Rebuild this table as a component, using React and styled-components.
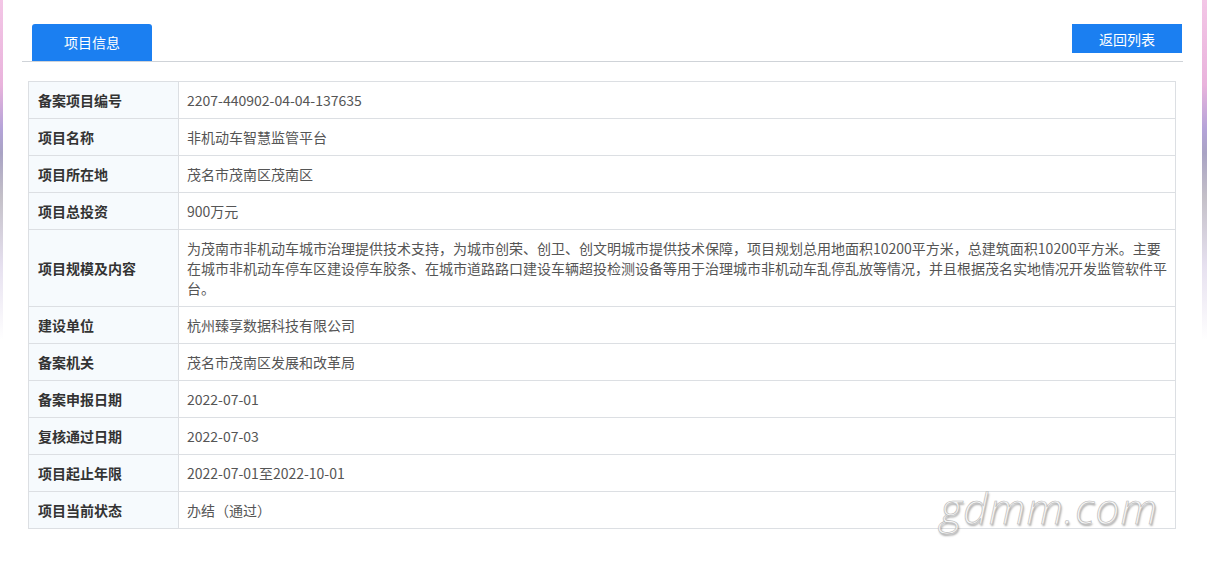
import React from 'react'
import styled, { createGlobalStyle } from 'styled-components'

const edge = `linear-gradient(180deg,#f3c6e6 0%,#e9b3dc 25%,#b4a3d8 38%,#a9a3c4 45%,#c4c0c8 58%,#e6e0ef 78%,#ffffff 100%)`

const Global = createGlobalStyle`
html,body{margin:0;padding:0;}
body{
  background:${edge} left top/3px 340px no-repeat, ${edge} right top/5px 340px no-repeat, #fff;
  font-family:"Microsoft YaHei","Noto Sans CJK SC",sans-serif;
  font-size:14px;color:#555;
  min-height:565px;
}
`

const Page=styled.div`
position:relative;
padding:24px 24px 0 22px;
height:541px;
`
const Header=styled.div`
display:flex;justify-content:space-between;align-items:flex-start;
padding:0 1px 0 10px;
border-bottom:1px solid #cfd3d8;
height:37px;
`
const Tab=styled.div`
width:120px;height:37px;line-height:37px;text-align:center;
background:#1b7ff1;color:#fff;font-size:14px;
border-radius:3px 3px 0 0;
`
const BackBtn=styled.button`
width:110px;height:29px;border:none;background:#1b7ff1;color:#fff;
font-family:inherit;font-size:14px;padding:0;cursor:pointer;
`
const Table=styled.table`
margin:19px 7px 0 6px;
width:calc(100% - 13px);
border-collapse:collapse;
border:1px solid #dcdfe3;
`
const Row=styled.tr``
const Label=styled.td`
width:131px;
padding:8px 9px;
line-height:20px;
background:#f6fafd;
color:#333;font-weight:bold;
border:1px solid #dcdfe3;
vertical-align:middle;
`
const Value=styled.td`
padding:8px 6px 8px 8px;
line-height:20px;
color:#555;
border:1px solid #dcdfe3;
`
const Watermark=styled.div`
position:absolute;
left:940px;top:478px;
font-family:"Open Sans","DejaVu Sans",sans-serif;
font-style:italic;font-weight:300;
font-size:43px;letter-spacing:1px;
color:#f6f6f6;
-webkit-text-stroke:0.6px #b8b8b8;
text-shadow:1px 2px 2px rgba(0,0,0,0.35);
pointer-events:none;
`

const rows=[
  ['备案项目编号','2207-440902-04-04-137635'],
  ['项目名称','非机动车智慧监管平台'],
  ['项目所在地','茂名市茂南区茂南区'],
  ['项目总投资','900万元'],
  ['项目规模及内容','为茂南市非机动车城市治理提供技术支持，为城市创荣、创卫、创文明城市提供技术保障，项目规划总用地面积10200平方米，总建筑面积10200平方米。主要在城市非机动车停车区建设停车胶条、在城市道路路口建设车辆超投检测设备等用于治理城市非机动车乱停乱放等情况，并且根据茂名实地情况开发监管软件平台。'],
  ['建设单位','杭州臻享数据科技有限公司'],
  ['备案机关','茂名市茂南区发展和改革局'],
  ['备案申报日期','2022-07-01'],
  ['复核通过日期','2022-07-03'],
  ['项目起止年限','2022-07-01至2022-10-01'],
  ['项目当前状态','办结（通过）'],
]

export default function App(){
  return (
    <>
      <Global/>
      <Page>
        <Header>
          <Tab>项目信息</Tab>
          <BackBtn>返回列表</BackBtn>
        </Header>
        <Table>
          <tbody>
            {rows.map(([k,v])=>(
              <Row key={k}>
                <Label>{k}</Label>
                <Value>{v}</Value>
              </Row>
            ))}
          </tbody>
        </Table>
        <Watermark>gdmm.com</Watermark>
      </Page>
    </>
  )
}
